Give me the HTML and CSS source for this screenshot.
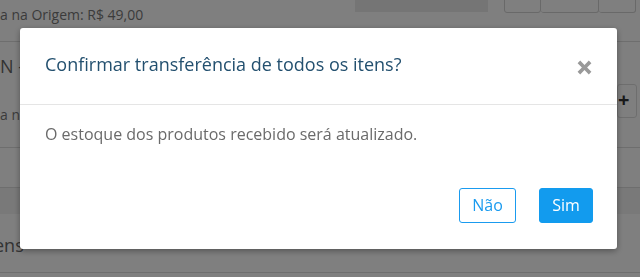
FILE: index.html
```html
<!DOCTYPE html>
<html lang="pt-BR">
<head>
<meta charset="utf-8">
<title>Confirmar transferência</title>
<link rel="stylesheet" href="styles.css">
</head>
<body>
<div class="page">
  <div class="row-top">
    <span class="origin">a na Origem: R$ 49,00</span>
    <div class="search-box"></div>
    <div class="btn-group">
      <span class="bg-btn b1"></span>
      <span class="bg-btn b2"></span>
      <span class="bg-btn b3"></span>
    </div>
  </div>
  <div class="row-mid">
    <div class="mid-text">
      <div class="mid-title">N -</div>
      <div class="mid-sub">a na</div>
    </div>
    <span class="plus-btn">+</span>
  </div>
  <div class="row-gap"></div>
  <div class="row-band"></div>
  <div class="row-items">ens</div>
</div>

<div class="overlay"></div>

<div class="modal">
  <div class="modal-header">
    <h4 class="modal-title">Confirmar transferência de todos os itens?</h4>
    <span class="close">
      <svg width="15" height="15" viewBox="0 0 15 15" aria-hidden="true">
        <path d="M3.2 0.6 L7.5 4.9 L11.8 0.6 L14.4 3.2 L10.1 7.5 L14.4 11.8 L11.8 14.4 L7.5 10.1 L3.2 14.4 L0.6 11.8 L4.9 7.5 L0.6 3.2 Z" fill="#999"/>
      </svg>
    </span>
  </div>
  <div class="modal-body">O estoque dos produtos recebido será atualizado.</div>
  <div class="modal-footer">
    <button class="btn btn-outline">Não</button>
    <button class="btn btn-primary">Sim</button>
  </div>
</div>
</body>
</html>
```

FILE: styles.css
```css
html, body {
  margin: 0;
  padding: 0;
}
body {
  background: #fff;
  font-family: "Open Sans", "Liberation Sans", sans-serif;
  overflow: hidden;
  width: 640px;
  height: 277px;
}
.page {
  width: 640px;
}
.row-top {
  height: 41px;
  border-bottom: 1px solid #ddd;
  display: flex;
  align-items: flex-start;
}
.origin {
  font-size: 14px;
  color: #777;
  line-height: 20px;
  margin-top: 5px;
  width: 355px;
  flex: none;
}
.search-box {
  width: 133px;
  height: 30px;
  margin-top: -18px;
  background: #ebebeb;
  flex: none;
}
.btn-group {
  display: flex;
  margin-left: 16px;
  margin-top: -18px;
}
.bg-btn {
  height: 29px;
  border: 1px solid #d2d2d2;
  border-radius: 0 0 3px 3px;
  display: block;
}
.b1 { width: 35px; }
.b2 { width: 57px; border-left: 0; }
.b3 { width: 36px; border-left: 0; }
.row-mid {
  height: 105px;
  border-bottom: 1px solid #ddd;
  display: flex;
  justify-content: space-between;
}
.mid-title {
  font-size: 18px;
  color: #666;
  line-height: 25px;
  margin-top: 12px;
}
.mid-sub {
  font-size: 14px;
  color: #777;
  line-height: 20px;
  margin-top: 26px;
}
.plus-btn {
  margin-top: 42px;
  width: 18px;
  height: 32px;
  border: 1px solid #ddd;
  border-radius: 3px;
  font-size: 20px;
  font-weight: bold;
  color: #333;
  line-height: 30px;
  margin-right: 3px;
}
.row-gap {
  height: 39px;
  border-bottom: 1px solid #ddd;
}
.row-band {
  height: 26px;
  background: #f2f2f2;
}
.row-items {
  height: 59px;
  border-bottom: 1px solid #ddd;
  font-size: 18px;
  color: #666;
  line-height: 25px;
  padding-top: 19px;
  box-sizing: border-box;
  margin-left: -6px;
}

.overlay {
  position: fixed;
  inset: 0;
  background: rgba(0, 0, 0, 0.5);
}

.modal {
  position: fixed;
  left: 20px;
  top: 28px;
  width: 597px;
  background: #fff;
  border-radius: 3px;
  box-shadow: 0 2px 6px rgba(0, 0, 0, 0.35);
}
.modal-header {
  display: flex;
  justify-content: space-between;
  align-items: flex-start;
  padding: 24px 25px 27px 25px;
  border-bottom: 1px solid #e5e5e5;
}
.modal-title {
  margin: 0;
  font-size: 18px;
  font-weight: normal;
  line-height: 25px;
  color: #23506f;
}
.close {
  display: block;
  width: 15px;
  height: 15px;
  margin-top: 8px;
}
.close svg {
  display: block;
}
.modal-body {
  padding: 18px 25px 0 25px;
  font-size: 16px;
  line-height: 22px;
  color: #6a6a6a;
}
.modal-footer {
  display: flex;
  justify-content: flex-end;
  gap: 23px;
  padding: 43px 24px 26px 24px;
}
.btn {
  font-family: "Open Sans", "Liberation Sans", sans-serif;
  font-size: 16px;
  height: 35px;
  border-radius: 3px;
  padding: 0;
  line-height: 33px;
  box-sizing: border-box;
  cursor: pointer;
}
.btn-outline {
  width: 57px;
  background: #fff;
  border: 1px solid #1a9bef;
  color: #1a9bef;
}
.btn-primary {
  width: 54px;
  background: #129bee;
  border: 1px solid #129bee;
  color: #fff;
}
```
